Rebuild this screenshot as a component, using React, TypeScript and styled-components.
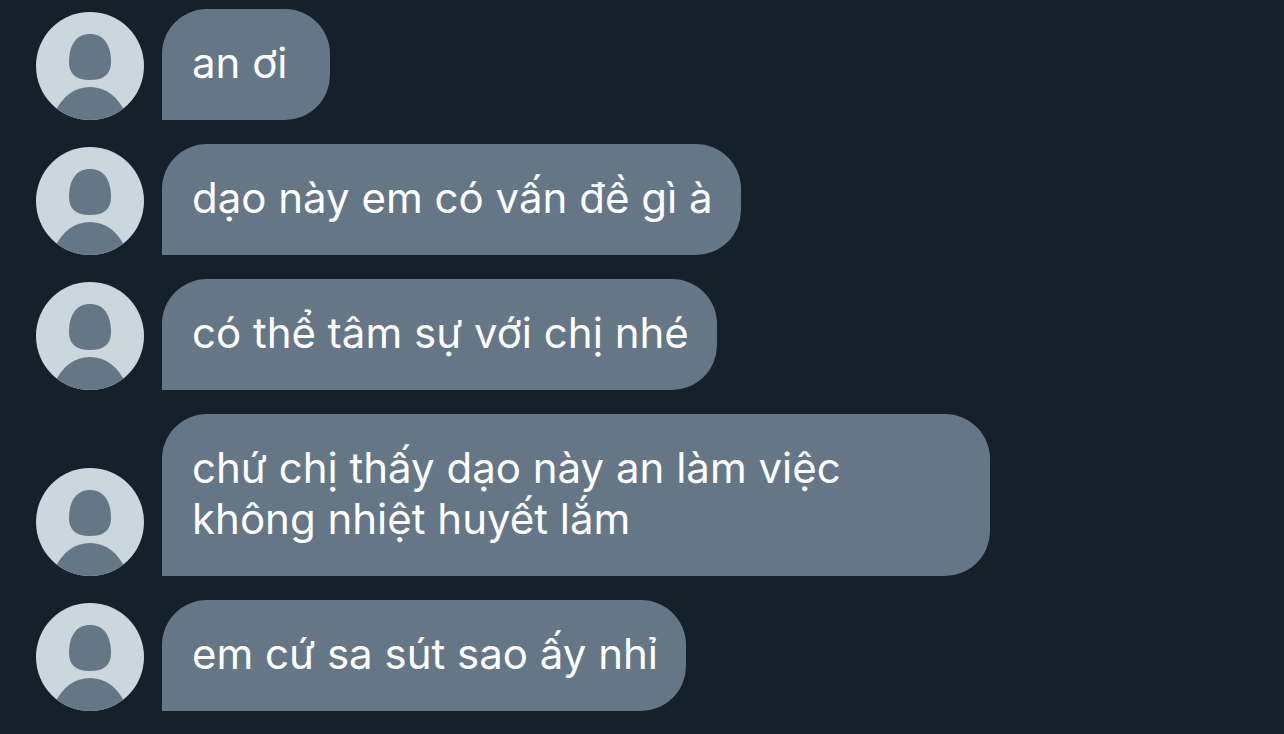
import React from "react";
import styled, { createGlobalStyle } from "styled-components";

const GlobalStyle = createGlobalStyle`
  * { box-sizing: border-box; }
  body {
    margin: 0;
    background: #15202b;
    font-family: Inter, "Noto Sans", sans-serif;
  }
`;

const Thread = styled.ul`
  display: flex;
  flex-direction: column;
  gap: 24px;
  margin: 0;
  padding: 9px 36px 23px;
  list-style: none;
`;

const Row = styled.li`
  display: flex;
  align-items: flex-end;
  gap: 18px;
`;

const Avatar = styled.svg`
  display: block;
  flex: none;
  width: 108px;
  height: 108px;
`;

const Bubble = styled.p`
  min-width: 168px;
  max-width: 828px;
  margin: 0;
  padding: 28px 28px 32px 30px;
  border-radius: 45px 45px 45px 0;
  background: #657786;
  color: #fff;
  font-size: 42px;
  line-height: 51px;
`;

const messages = [
  "an ơi",
  "dạo này em có vấn đề gì à",
  "có thể tâm sự với chị nhé",
  "chứ chị thấy dạo này an làm việc không nhiệt huyết lắm",
  "em cứ sa sút sao ấy nhỉ",
];

function DefaultAvatar() {
  return (
    <Avatar viewBox="0 0 108 108" aria-hidden="true">
      <defs>
        <clipPath id="avatar-circle">
          <circle cx="54" cy="54" r="54" />
        </clipPath>
      </defs>
      <g clipPath="url(#avatar-circle)">
        <rect width="108" height="108" fill="#ccd6dd" />
        <path
          d="M54 22C67 22 75 32 75 50C75 62 68 68 54 68C40 68 33 62 33 50C33 32 41 22 54 22Z"
          fill="#657786"
        />
        <path d="M18 102C26 84 39 75 54 75S82 84 90 102V108H18Z" fill="#657786" />
      </g>
    </Avatar>
  );
}

export default function App() {
  return (
    <>
      <GlobalStyle />
      <Thread>
        {messages.map((text) => (
          <Row key={text}>
            <DefaultAvatar />
            <Bubble>{text}</Bubble>
          </Row>
        ))}
      </Thread>
    </>
  );
}
